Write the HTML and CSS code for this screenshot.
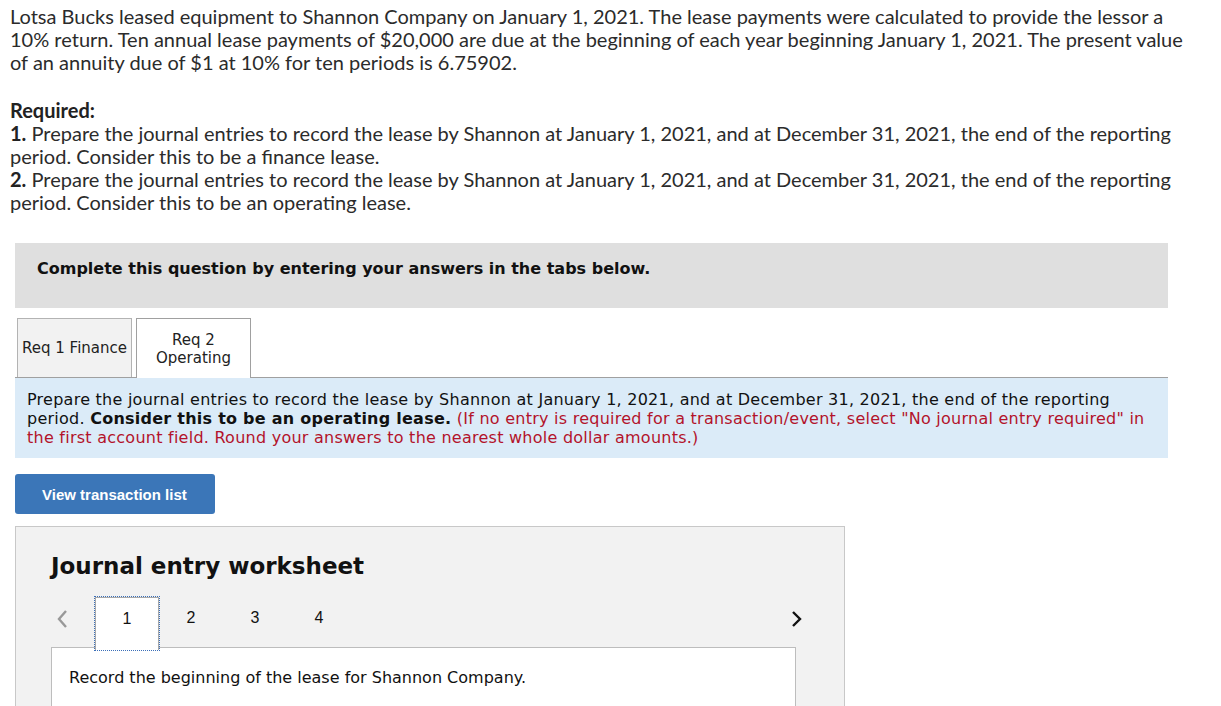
FILE: index.html
```html
<!DOCTYPE html>
<html>
<head>
<meta charset="utf-8">
<link rel="stylesheet" href="styles.css">
</head>
<body>
<div class="question">
  <p class="intro">Lotsa Bucks leased equipment to Shannon Company on January 1, 2021. The lease payments were calculated to provide the lessor a 10% return. Ten annual lease payments of $20,000 are due at the beginning of each year beginning January 1, 2021. The present value of an annuity due of $1 at 10% for ten periods is 6.75902.</p>
  <p class="required"><strong>Required:</strong><br><strong>1.</strong> Prepare the journal entries to record the lease by Shannon at January 1, 2021, and at December 31, 2021, the end of the reporting period. Consider this to be a finance lease.<br><strong>2.</strong> Prepare the journal entries to record the lease by Shannon at January 1, 2021, and at December 31, 2021, the end of the reporting period. Consider this to be an operating lease.</p>
</div>

<div class="work">
  <div class="banner">Complete this question by entering your answers in the tabs below.</div>

  <div class="tabs">
    <div class="tab">Req 1 Finance</div>
    <div class="tab active">Req 2<br>Operating</div>
  </div>

  <div class="instructions">Prepare the journal entries to record the lease by Shannon at January 1, 2021, and at December 31, 2021, the end of the reporting period. <strong>Consider this to be an operating lease.</strong> <span class="note">(If no entry is required for a transaction/event, select "No journal entry required" in the first account field. Round your answers to the nearest whole dollar amounts.)</span></div>

  <button class="btn">View transaction list</button>

  <div class="panel">
    <h2 class="panel-title">Journal entry worksheet</h2>
    <div class="pager">
      <span class="arrow prev"><svg width="12" height="20" viewBox="0 0 12 20"><path d="M10 2 L3 10 L10 18" fill="none" stroke="#999" stroke-width="2.4"/></svg></span>
      <div class="pages">
        <span class="page current">1</span>
        <span class="page">2</span>
        <span class="page">3</span>
        <span class="page">4</span>
      </div>
      <span class="arrow next"><svg width="12" height="20" viewBox="0 0 12 20"><path d="M2 3 L9 10 L2 17" fill="none" stroke="#111" stroke-width="2.4"/></svg></span>
    </div>
    <div class="entry">
      <p class="entry-text">Record the beginning of the lease for Shannon Company.</p>
    </div>
  </div>
</div>
</body>
</html>
```

FILE: styles.css
```css
html, body {
  margin: 0;
  padding: 0;
  background: #fff;
}
body {
  padding: 0 8px;
}
.question {
  padding: 5px 2px 0 2px;
  width: 1185px;
  font-family: Lato, "Open Sans", sans-serif;
  font-size: 20px;
  line-height: 23px;
  color: #2b2b2b;
}
.question p {
  margin: 0;
}
.intro {
  margin-bottom: 25px !important;
}
.required strong {
  font-weight: 700;
  color: #222;
}
.work {
  margin-top: 29px;
  margin-left: 7px;
  width: 1153px;
  font-family: "DejaVu Sans", Verdana, sans-serif;
}
.banner {
  background: #dfdfdf;
  height: 65px;
  box-sizing: border-box;
  padding: 16px 0 0 22px;
  font-size: 16px;
  font-weight: 700;
  color: #111;
}
.tabs {
  display: flex;
  gap: 4px;
  margin-top: 10px;
  padding-left: 2px;
  border-bottom: 1px solid #a0a0a0;
  height: 59px;
  align-items: flex-end;
}
.tab {
  width: 115px;
  height: 59px;
  box-sizing: border-box;
  border: 1px solid #b3b3b3;
  border-bottom: none;
  background: #f2f2f2;
  display: flex;
  align-items: center;
  justify-content: center;
  text-align: center;
  font-size: 15px;
  line-height: 18px;
  color: #222;
  white-space: nowrap;
}
.tab.active {
  background: #fff;
  border-color: #a0a0a0;
  height: 60px;
  margin-bottom: -1px;
}
.instructions {
  background: #dbebf8;
  padding: 12px 23px 11px 12px;
  font-size: 16px;
  line-height: 19px;
  letter-spacing: 0.25px;
  color: #111;
}
.instructions strong {
  font-weight: 700;
}
.note {
  color: #b3132b;
}
.btn {
  display: block;
  margin-top: 16px;
  width: 200px;
  height: 40px;
  border: none;
  border-radius: 3px;
  background: #3b76b8;
  color: #fff;
  font-family: "Liberation Sans", Arial, sans-serif;
  font-weight: 700;
  font-size: 15px;
  text-align: left;
  padding: 0 0 0 27px;
}
.panel {
  margin-top: 12px;
  width: 830px;
  height: 200px;
  box-sizing: border-box;
  background: #f2f2f2;
  border: 1px solid #c8c8c8;
  padding: 0 48px 0 35px;
}
.panel-title {
  margin: 23px 0 0 0;
  font-size: 23px;
  font-weight: 700;
  color: #111;
  line-height: 32px;
}
.pager {
  display: flex;
  align-items: flex-start;
  margin-top: 15px;
  height: 50px;
}
.arrow {
  display: flex;
  align-items: center;
  height: 44px;
}
.arrow.prev {
  margin-left: 5px;
}
.arrow.next {
  margin-right: -7px;
}
.pages {
  display: flex;
  margin-left: 27px;
  flex: 1;
}
.page {
  width: 64px;
  height: 53px;
  flex-shrink: 0;
  box-sizing: border-box;
  text-align: center;
  padding-top: 12px;
  font-family: "Liberation Sans", Arial, sans-serif;
  font-size: 16px;
  color: #111;
}
.page.current {
  background: #fff;
  border: 1px solid #a8a8a8;
  border-bottom: none;
  outline: 1px dotted #3b6fb8;
  outline-offset: 0;
  position: relative;
  z-index: 1;
}
.entry {
  background: #fff;
  border: 1px solid #bdbdbd;
  height: 80px;
  margin-top: 0;
}
.entry-text {
  margin: 20px 0 0 17px;
  font-size: 16px;
  color: #111;
}
```
